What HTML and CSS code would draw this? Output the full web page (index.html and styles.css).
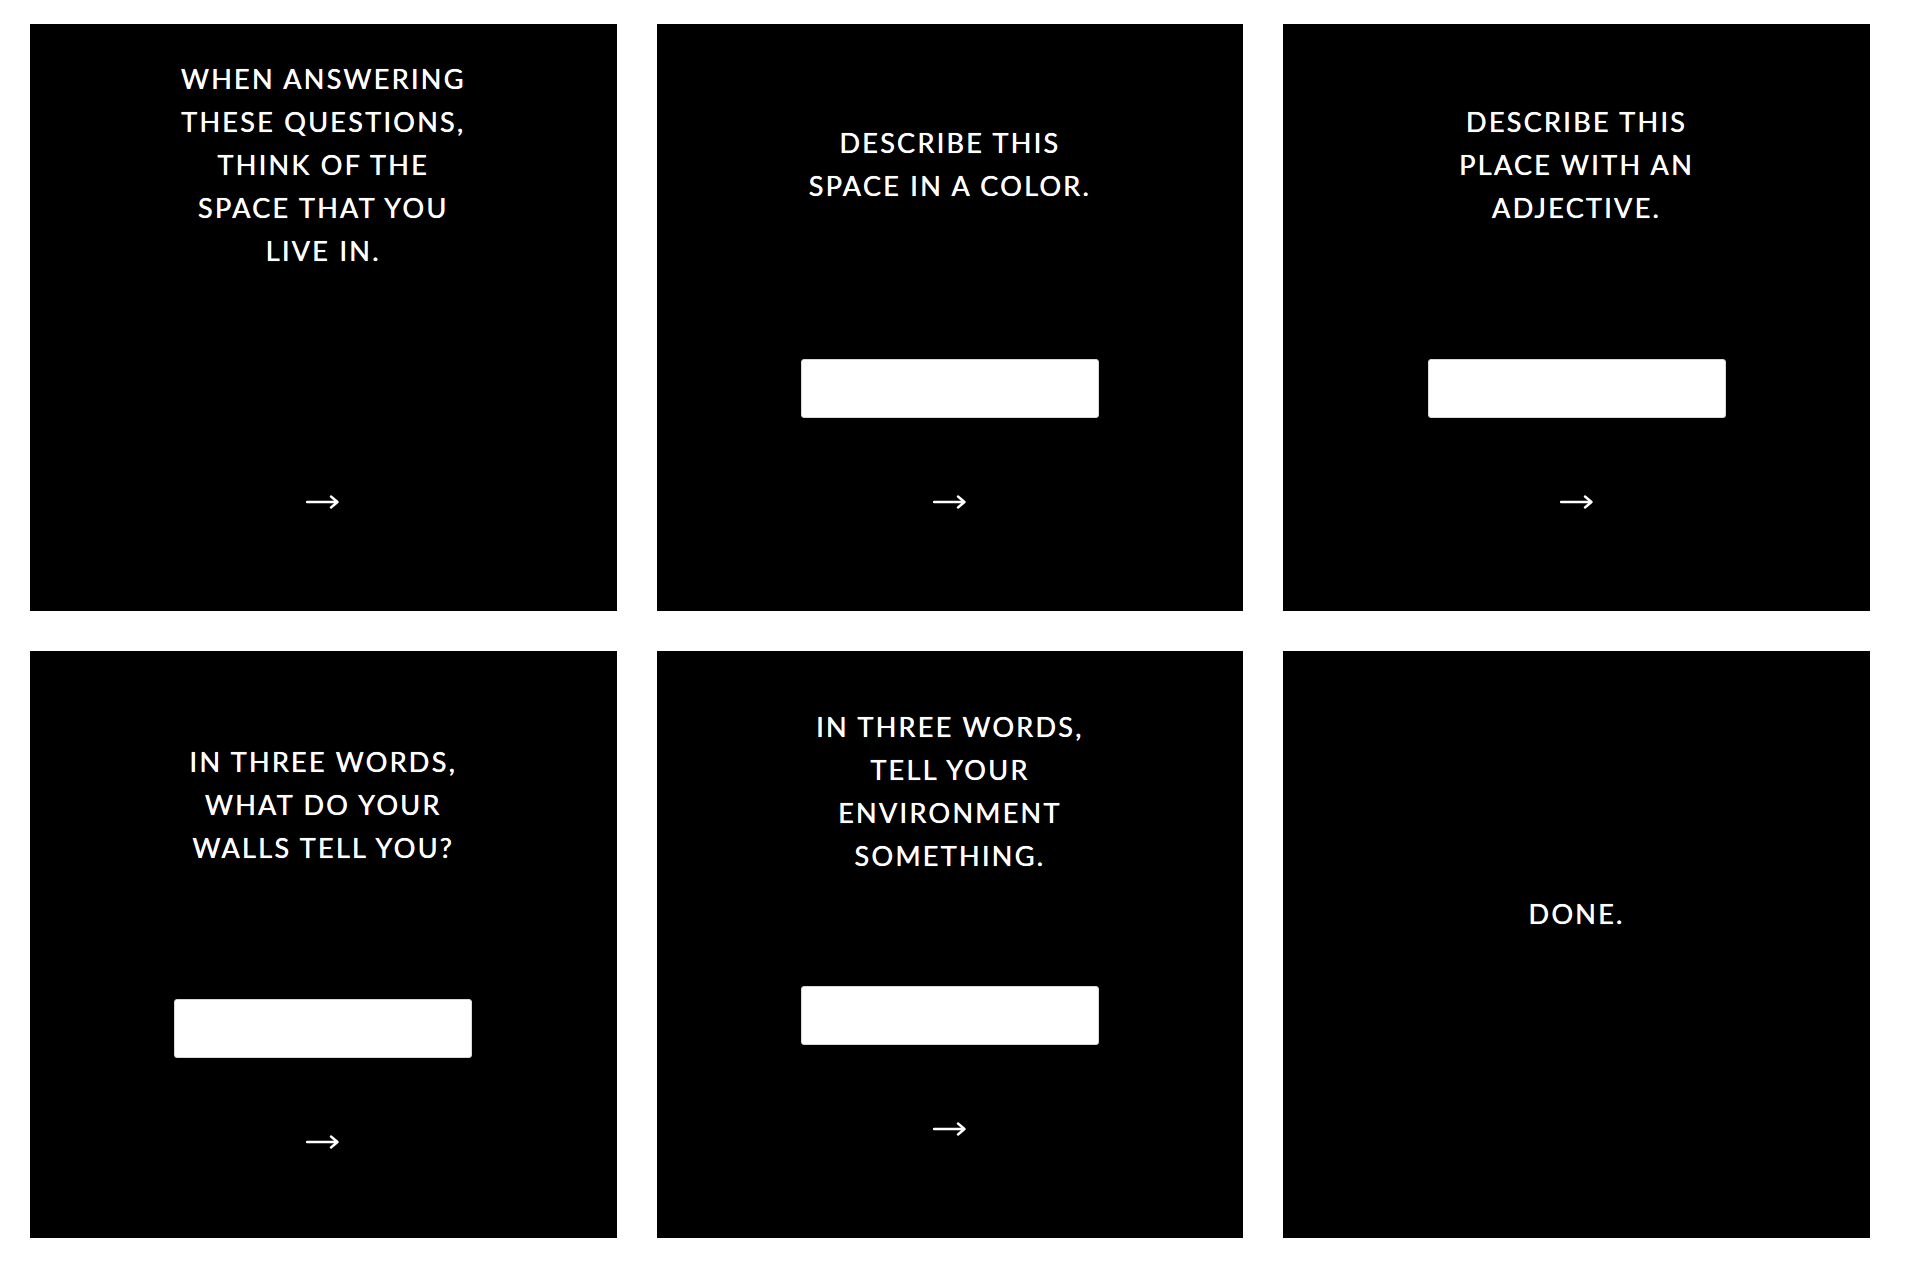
FILE: index.html
```html
<!DOCTYPE html>
<html lang="en">
<head>
<meta charset="utf-8">
<title>Questions</title>
<link rel="stylesheet" href="styles.css">
</head>
<body>
<main class="grid">
  <section class="panel">
    <div class="q"><p>WHEN ANSWERING<br>THESE QUESTIONS,<br>THINK OF THE<br>SPACE THAT YOU<br>LIVE IN.</p></div>
    <div class="slot"></div>
    <div class="next"><svg width="34" height="14" viewBox="0 0 34 14"><path d="M1 7H31M25 1.5L31.5 7L25 12.5" fill="none" stroke="#fff" stroke-width="2.4" stroke-linecap="round" stroke-linejoin="round"/></svg></div>
  </section>
  <section class="panel">
    <div class="q"><p>DESCRIBE THIS<br>SPACE IN A COLOR.</p></div>
    <div class="slot"><input class="field" type="text" aria-label="Answer"></div>
    <div class="next"><svg width="34" height="14" viewBox="0 0 34 14"><path d="M1 7H31M25 1.5L31.5 7L25 12.5" fill="none" stroke="#fff" stroke-width="2.4" stroke-linecap="round" stroke-linejoin="round"/></svg></div>
  </section>
  <section class="panel">
    <div class="q"><p>DESCRIBE THIS<br>PLACE WITH AN<br>ADJECTIVE.</p></div>
    <div class="slot"><input class="field" type="text" aria-label="Answer"></div>
    <div class="next"><svg width="34" height="14" viewBox="0 0 34 14"><path d="M1 7H31M25 1.5L31.5 7L25 12.5" fill="none" stroke="#fff" stroke-width="2.4" stroke-linecap="round" stroke-linejoin="round"/></svg></div>
  </section>
  <section class="panel shifted">
    <div class="q"><p>IN THREE WORDS,<br>WHAT DO YOUR<br>WALLS TELL YOU?</p></div>
    <div class="slot"><input class="field" type="text" aria-label="Answer"></div>
    <div class="next"><svg width="34" height="14" viewBox="0 0 34 14"><path d="M1 7H31M25 1.5L31.5 7L25 12.5" fill="none" stroke="#fff" stroke-width="2.4" stroke-linecap="round" stroke-linejoin="round"/></svg></div>
  </section>
  <section class="panel">
    <div class="q"><p>IN THREE WORDS,<br>TELL YOUR<br>ENVIRONMENT<br>SOMETHING.</p></div>
    <div class="slot"><input class="field" type="text" aria-label="Answer"></div>
    <div class="next"><svg width="34" height="14" viewBox="0 0 34 14"><path d="M1 7H31M25 1.5L31.5 7L25 12.5" fill="none" stroke="#fff" stroke-width="2.4" stroke-linecap="round" stroke-linejoin="round"/></svg></div>
  </section>
  <section class="panel">
    <div class="q done"><p>DONE.</p></div>
  </section>
</main>
</body>
</html>
```

FILE: styles.css
```css
html, body {
  margin: 0;
  padding: 0;
  background: #fff;
}

.grid {
  width: 1840px;
  padding: 24px 0 0 30px;
  display: grid;
  grid-template-columns: repeat(3, minmax(0, 1fr));
  grid-auto-rows: 587px;
  column-gap: 40px;
  row-gap: 40px;
}

.panel {
  min-width: 0;
  min-height: 0;
  box-sizing: border-box;
  background: #000;
  display: flex;
  flex-direction: column;
  align-items: center;
  color: #fff;
  font-family: "Lato", "DejaVu Sans", sans-serif;
  font-weight: 400;
  overflow: hidden;
}

.panel.shifted {
  padding-top: 13px;
}

.q {
  flex: none;
  height: 280px;
  display: flex;
  align-items: center;
  justify-content: center;
  align-self: stretch;
}

.q.done {
  height: 524px;
}

.q p {
  margin: 0;
  text-align: center;
  font-size: 27px;
  line-height: 43px;
  letter-spacing: 2.3px;
  text-shadow: 0 0 0.6px #fff, 0 0 1px rgba(255, 255, 255, 0.6);
}

.slot {
  flex: none;
  margin-top: 55px;
  height: 59px;
  width: 298px;
}

.field {
  display: block;
  box-sizing: border-box;
  width: 298px;
  height: 59px;
  margin: 0;
  border: 1px solid #d8d8d8;
  border-radius: 3px;
  background: #fff;
  padding: 0 12px;
  font: inherit;
  outline: none;
}

.next {
  flex: none;
  margin-top: 64px;
  height: 40px;
  display: flex;
  align-items: center;
  justify-content: center;
}

.next svg {
  display: block;
}
```
